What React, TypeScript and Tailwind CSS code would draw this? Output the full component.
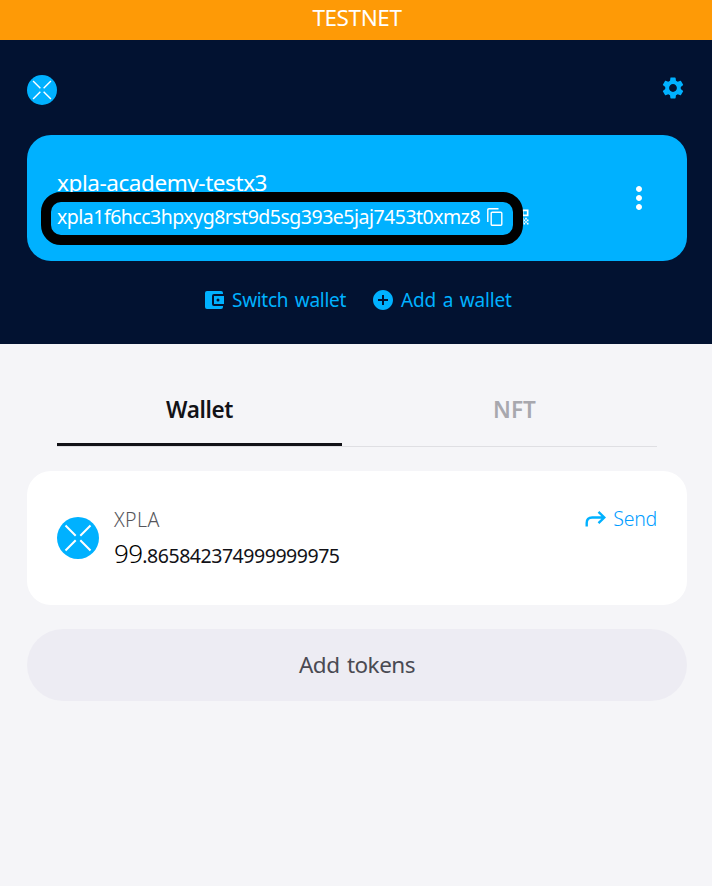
import { MdSettings, MdMoreVert, MdAddCircle, MdQrCode } from "react-icons/md";

function XplaLogo({ className }: { className: string }) {
  return (
    <svg viewBox="0 0 42 42" className={className} fill="none">
      <circle cx="21" cy="21" r="21" fill="#00b1ff" />
      <path d="M8.5 8.5 18.7 18.7M33.5 8.5 23.3 18.7M8.5 33.5 18.7 23.3M33.5 33.5 23.3 23.3" stroke="#fff" strokeWidth="2" />
    </svg>
  );
}

function WalletIcon() {
  return (
    <svg viewBox="0 0 20 18" className="h-[18px] w-[20px]" fill="none">
      <path fill="#00b1ff" fillRule="evenodd" d="M2 0H16Q18 0 18 2V3H9Q7 3 7 5V13Q7 15 9 15H18V16Q18 18 16 18H2Q0 18 0 16V2Q0 0 2 0ZM9 5H19V13H9ZM13 7.5A1.5 1.5 0 1 0 13 10.5A1.5 1.5 0 1 0 13 7.5Z" />
    </svg>
  );
}

function CopyIcon() {
  return (
    <svg viewBox="0 0 16 18" className="h-[18px] w-4" fill="none" stroke="#fff" strokeWidth="1.4">
      <path d="M0.8 14V2Q0.8 0.8 2 0.8H11.5" />
      <rect x="4.2" y="4.2" width="10.6" height="13" rx="1" />
    </svg>
  );
}

export default function App() {
  return (
    <div className="h-[886px] w-[712px] overflow-hidden bg-[#f5f5f8] font-['Noto_Sans',sans-serif] whitespace-nowrap">
      <div className="flex h-10 justify-center bg-[#fe9a06] text-[22.5px] leading-[36px] tracking-[-0.4px] text-white">
        <span className="pl-[2px]">TESTNET</span>
      </div>

      <header className="h-[304px] bg-[#021231] pr-[25px] pl-[27px] text-[#00b1ff]">
        <div className="flex h-[95px] items-start justify-between">
          <XplaLogo className="mt-[35px] size-[30px]" />
          <MdSettings className="mt-[34.5px] mr-px size-[26px]" />
        </div>

        <section className="relative flex h-[126px] w-[660px] justify-between rounded-[24px] bg-[#00b1ff] pt-[33px] pr-[33px] pl-[30px] text-white">
          <div>
            <div className="h-[30px] text-[22.5px] leading-[30px] tracking-[-0.43px]">xpla-academy-testx3</div>
            <div className="flex h-[38px] items-center">
              <span className="w-[430px] text-[19.5px] tracking-[-0.5px]">xpla1f6hcc3hpxyg8rst9d5sg393e5jaj7453t0xmz8</span>
              <CopyIcon />
              <MdQrCode className="ml-[8px] size-[20px]" />
            </div>
          </div>
          <MdMoreVert className="mt-[12px] -mr-[3px] size-9" />
          <div className="absolute top-[57px] left-[14px] h-[53px] w-[482px] rounded-[20px] border-[10px] border-black" />
        </section>

        <div className="flex h-[78px] items-center pl-[178px] text-[19px]">
          <WalletIcon />
          <span className="ml-[7px] w-[115px] tracking-[-0.3px] [word-spacing:2px]">Switch wallet</span>
          <MdAddCircle className="ml-[24px] size-6" />
          <span className="ml-[6px] tracking-[-0.2px] [word-spacing:2px]">Add a wallet</span>
        </div>
      </header>

      <main className="px-[27px]">
        <nav className="mx-[30px] flex h-[103px] w-[600px] gap-[30px] border-b border-[#dfdfe3] text-[22.5px] font-semibold">
          <div className="flex w-[285px] justify-center border-b-[3px] border-[#121217] pt-[49px] leading-[34px] tracking-[-0.4px] text-[#121217]">Wallet</div>
          <div className="flex w-[285px] justify-center pt-[49px] leading-[34px] text-[#a8a8ae]">NFT</div>
        </nav>

        <section className="mt-6 flex h-[134px] w-[660px] items-start rounded-[24px] bg-white px-[30px]">
          <XplaLogo className="mt-[46px] size-[42px]" />
          <div className="ml-[15px] flex-1 pt-[34px]">
            <div className="h-[28px] text-[19.5px] leading-[29px] font-light tracking-[0.4px] text-[#56565b]">XPLA</div>
            <div className="h-[40px] text-[26px] leading-[40px] font-light tracking-[-0.7px] text-black">
              99<span className="text-[19.5px] font-normal tracking-[-0.46px] text-[#121217]">.865842374999999975</span>
            </div>
          </div>
          <div className="mt-[34px] flex h-[28px] items-center text-[19.5px] font-light text-[#009dff]">
            <svg viewBox="0 0 21 16" className="mr-[7px] h-4 w-[21px]" fill="none" stroke="#00b1ff" strokeWidth="2.4">
              <path d="M1.7 15.5V12Q1.7 6.5 7.2 6.5H19.3M13.5 0.9 19.3 6.5 13.5 12.1" />
            </svg>
            <span className="tracking-[-0.25px]">Send</span>
          </div>
        </section>

        <button className="mt-6 flex h-[72px] w-[660px] items-center justify-center rounded-full bg-[#edecf3] text-[22.5px] tracking-[-0.5px] text-[#4a4a52] [word-spacing:2px]">Add tokens</button>
      </main>
    </div>
  );
}
